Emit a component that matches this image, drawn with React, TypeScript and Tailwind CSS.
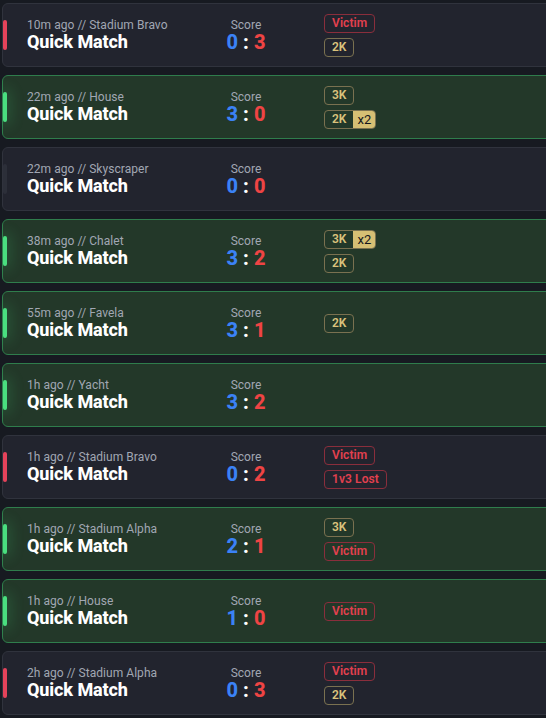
import React from "react";

type Badge = { text: string; kind: "red" | "gold"; mult?: string };
type Match = {
  meta: string;
  a: number;
  b: number;
  result: "win" | "loss" | "neutral";
  badges: Badge[];
};

const matches: Match[] = [
  { meta: "10m ago // Stadium Bravo", a: 0, b: 3, result: "loss", badges: [{ text: "Victim", kind: "red" }, { text: "2K", kind: "gold" }] },
  { meta: "22m ago // House", a: 3, b: 0, result: "win", badges: [{ text: "3K", kind: "gold" }, { text: "2K", kind: "gold", mult: "x2" }] },
  { meta: "22m ago // Skyscraper", a: 0, b: 0, result: "neutral", badges: [] },
  { meta: "38m ago // Chalet", a: 3, b: 2, result: "win", badges: [{ text: "3K", kind: "gold", mult: "x2" }, { text: "2K", kind: "gold" }] },
  { meta: "55m ago // Favela", a: 3, b: 1, result: "win", badges: [{ text: "2K", kind: "gold" }] },
  { meta: "1h ago // Yacht", a: 3, b: 2, result: "win", badges: [] },
  { meta: "1h ago // Stadium Bravo", a: 0, b: 2, result: "loss", badges: [{ text: "Victim", kind: "red" }, { text: "1v3 Lost", kind: "red" }] },
  { meta: "1h ago // Stadium Alpha", a: 2, b: 1, result: "win", badges: [{ text: "3K", kind: "gold" }, { text: "Victim", kind: "red" }] },
  { meta: "1h ago // House", a: 1, b: 0, result: "win", badges: [{ text: "Victim", kind: "red" }] },
  { meta: "2h ago // Stadium Alpha", a: 0, b: 3, result: "loss", badges: [{ text: "Victim", kind: "red" }, { text: "2K", kind: "gold" }] },
];

function BadgeView({ b }: { b: Badge }) {
  if (b.kind === "red") {
    return (
      <div className="flex h-[19px] items-center rounded-[4px] border border-[#8a2e3c] px-[7px] text-[12px] font-semibold leading-none tracking-[0.1px] text-[#e2404f]">
        {b.text}
      </div>
    );
  }
  return (
    <div className="flex h-[19px] items-stretch overflow-hidden rounded-[4px] border border-[#7a7150] text-[12px] leading-none">
      <div className="flex items-center px-[7px] font-semibold text-[#d9c27c]">{b.text}</div>
      {b.mult && (
        <div className="flex items-center bg-[#d6bf74] px-[4px] text-[13px] font-normal text-[#15171c]">{b.mult}</div>
      )}
    </div>
  );
}

function Card({ m }: { m: Match }) {
  const cardCls =
    m.result === "win"
      ? "border-[#2f7d4c] bg-[#233829]"
      : "border-[#30333d] bg-[#22242e]";
  const barCls =
    m.result === "win"
      ? "bg-[#4ade80] shadow-[0_0_14px_4px_rgba(74,222,128,0.18)]"
      : m.result === "loss"
      ? "bg-[#e5435a]"
      : "bg-[#2c2f39]";
  return (
    <div className={`flex h-[64px] w-[570px] items-center rounded-[6px] border ${cardCls}`}>
      <div className={`h-[30px] w-[4px] shrink-0 rounded-[2px] ${barCls}`} />
      <div className="ml-[20px] flex w-[180px] shrink-0 flex-col">
        <div className="text-[12px] leading-[16px] tracking-[0.05px] text-[#a1a7b3]">{m.meta}</div>
        <div className="-mt-[2px] text-[18px] font-extrabold leading-[22px] tracking-[-0.1px] text-white">Quick Match</div>
      </div>
      <div className="flex w-[78px] shrink-0 flex-col items-center">
        <div className="text-[12px] leading-[16px] text-[#a1a7b3]">Score</div>
        <div className="-mt-[2px] whitespace-pre text-[20px] font-extrabold leading-[22px]">
          <span className="text-[#3b82f6]">{m.a}</span>
          <span className="text-white"> : </span>
          <span className="text-[#ef4444]">{m.b}</span>
        </div>
      </div>
      <div className="ml-[39px] flex flex-col items-start gap-[5px]">
        {m.badges.map((b, i) => (
          <BadgeView key={i} b={b} />
        ))}
      </div>
    </div>
  );
}

export default function App() {
  return (
    <div
      className="h-[718px] w-[546px] overflow-hidden bg-[#171a21] pl-[2px] pt-[3px]"
      style={{ fontFamily: "Roboto, 'Liberation Sans', sans-serif" }}
    >
      <div className="flex flex-col gap-[8px]">
        {matches.map((m, i) => (
          <Card key={i} m={m} />
        ))}
      </div>
    </div>
  );
}
